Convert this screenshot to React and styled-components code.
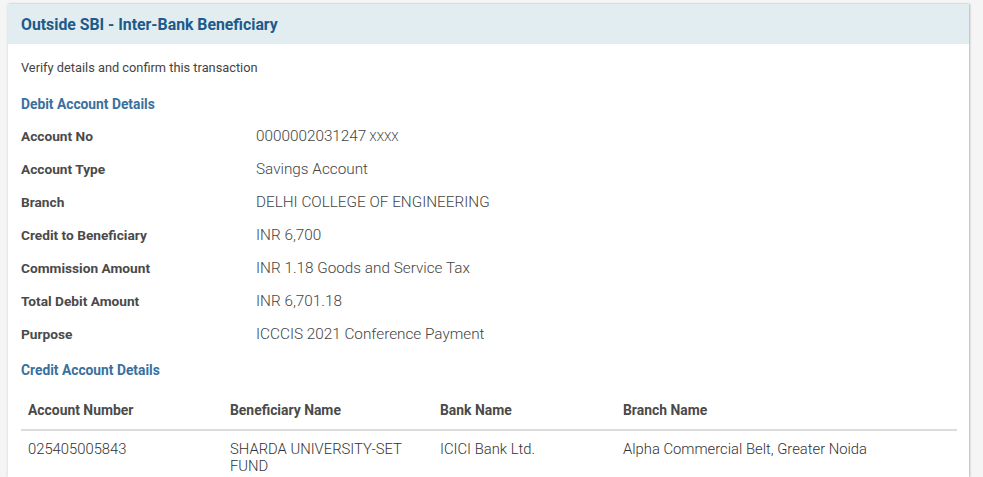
import React from "react";
import styled, { createGlobalStyle } from "styled-components";

const GlobalStyle = createGlobalStyle`
  body {
    margin: 0;
    background-color: #f5f5f5;
    font-family: Roboto, "Liberation Sans", sans-serif;
    color: #444;
  }
`;

const Page = styled.div`
  padding: 4px 14px 0 8px;
`;

const Card = styled.div`
  background-color: #fff;
  box-shadow: 1px 0 2px rgba(0, 0, 0, 0.25), -1px 0 3px rgba(0, 0, 0, 0.06);
  min-height: 473px;
`;

const Header = styled.div`
  background-color: #e1edf1;
  height: 40px;
  display: flex;
  align-items: center;
  padding-left: 13px;
`;

const Title = styled.h1`
  margin: 0;
  font-size: 15.8px;
  font-weight: 700;
  color: #1d5a8a;
`;

const Body = styled.div`
  padding: 14px 12px 0 13px;
`;

const Intro = styled.p`
  margin: 0;
  font-size: 12.8px;
  line-height: 20px;
  color: #444;
`;

const SectionTitle = styled.h2`
  margin: ${(p) => p.$top}px 0 0;
  font-size: 13.8px;
  font-weight: 700;
  line-height: 20px;
  color: #39709e;
`;

const DetailList = styled.div`
  margin-top: 5px;
  display: flex;
  flex-direction: column;
`;

const DetailRow = styled.div`
  display: grid;
  grid-template-columns: 235px 1fr;
  height: 33px;
  align-items: center;
`;

const Label = styled.span`
  font-size: 13.7px;
  font-weight: 700;
  color: #4a4a4a;
`;

const Value = styled.span`
  color: #444;
  font-size: 15.3px;
  font-weight: 300;
`;

const Masked = styled.span`
  font-size: 12px;
  margin-left: 3px;
`;

const Table = styled.table`
  margin-top: 11px;
  width: 936px;
  border-collapse: collapse;
  table-layout: fixed;
`;

const Th = styled.th`
  text-align: left;
  font-size: 13.9px;
  font-weight: 700;
  color: #4a4a4a;
  height: 38px;
  padding: 0 0 0 7px;
  border-bottom: 2px solid #dcdcdc;
`;

const Td = styled.td`
  vertical-align: top;
  font-size: 14.8px;
  font-weight: 300;
  line-height: 17px;
  color: #333;
  padding: 10px 20px 0 7px;
`;

const details = [
  ["Account No", "0000002031247", "XXXX"],
  ["Account Type", "Savings Account"],
  ["Branch", "DELHI COLLEGE OF ENGINEERING"],
  ["Credit to Beneficiary", "INR 6,700"],
  ["Commission Amount", "INR 1.18 Goods and Service Tax"],
  ["Total Debit Amount", "INR 6,701.18"],
  ["Purpose", "ICCCIS 2021 Conference Payment"],
];

const columns = [
  ["Account Number", 202],
  ["Beneficiary Name", 210],
  ["Bank Name", 183],
  ["Branch Name", 341],
];

const credit = [
  "025405005843",
  "SHARDA UNIVERSITY-SET FUND",
  "ICICI Bank Ltd.",
  "Alpha Commercial Belt, Greater Noida",
];

const App = () => {
  return (
    <>
      <GlobalStyle />
      <Page>
        <Card>
          <Header>
            <Title>Outside SBI - Inter-Bank Beneficiary</Title>
          </Header>
          <Body>
            <Intro>Verify details and confirm this transaction</Intro>
            <SectionTitle $top={16}>Debit Account Details</SectionTitle>
            <DetailList>
              {details.map(([label, value, masked]) => (
                <DetailRow key={label}>
                  <Label>{label}</Label>
                  <Value>
                    {value}
                    {masked && <Masked>{masked}</Masked>}
                  </Value>
                </DetailRow>
              ))}
            </DetailList>
            <SectionTitle $top={10}>Credit Account Details</SectionTitle>
            <Table>
              <colgroup>
                {columns.map(([name, w]) => (
                  <col key={name} style={{ width: w }} />
                ))}
              </colgroup>
              <thead>
                <tr>
                  {columns.map(([name]) => (
                    <Th key={name}>{name}</Th>
                  ))}
                </tr>
              </thead>
              <tbody>
                <tr>
                  {credit.map((c) => (
                    <Td key={c}>{c}</Td>
                  ))}
                </tr>
              </tbody>
            </Table>
          </Body>
        </Card>
      </Page>
    </>
  );
};

export default App;
